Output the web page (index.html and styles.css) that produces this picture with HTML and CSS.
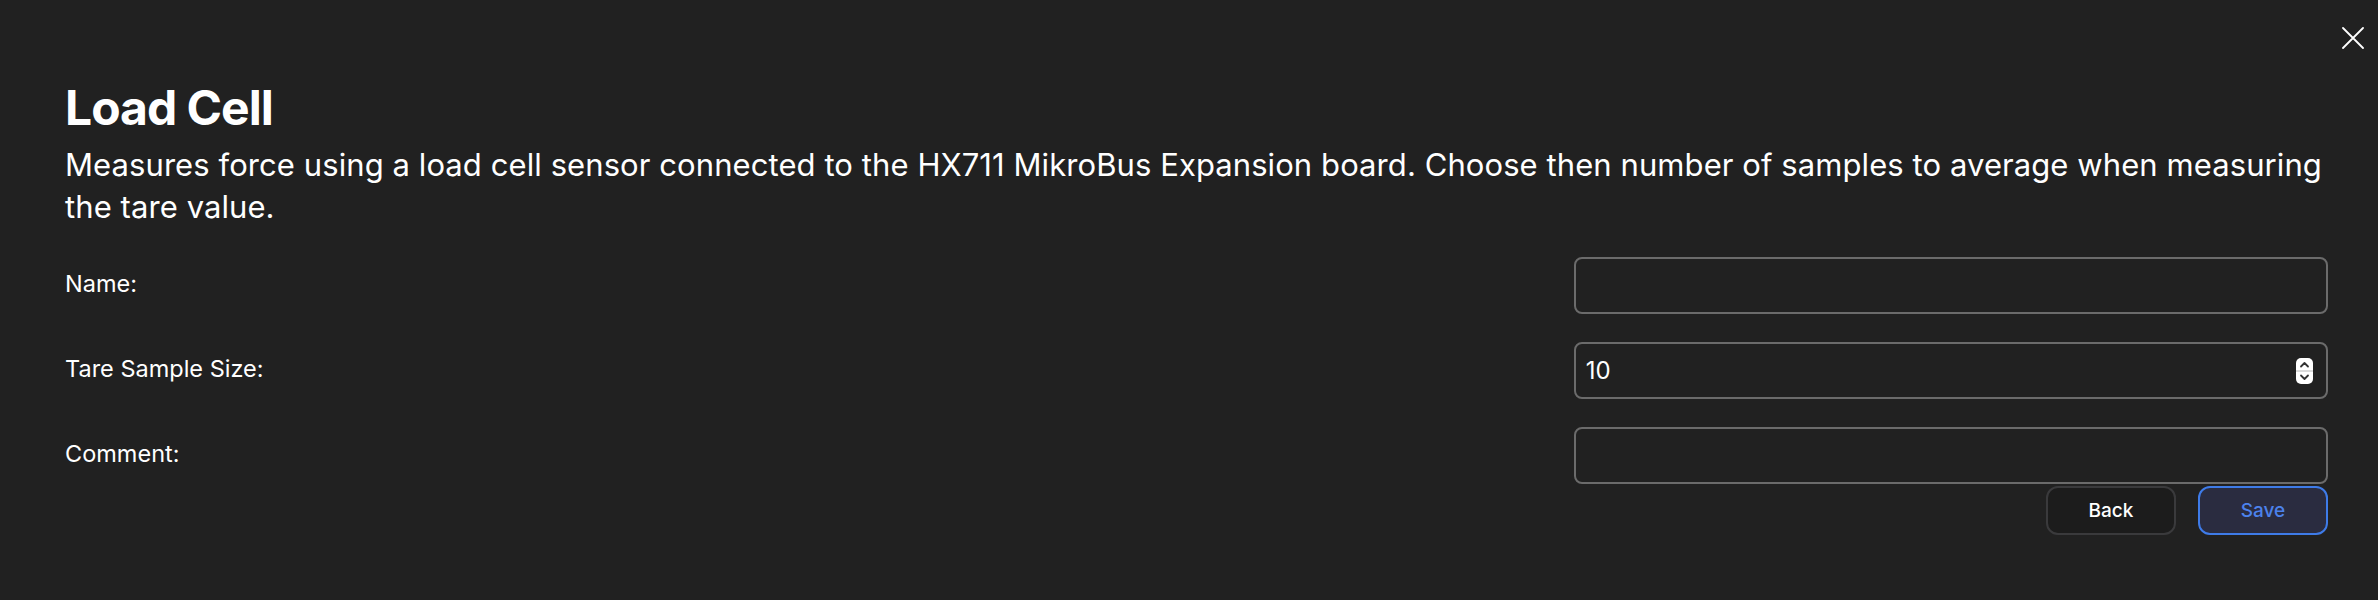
FILE: index.html
```html
<!DOCTYPE html>
<html lang="en">
<head>
  <meta charset="UTF-8">
  <meta name="viewport" content="width=device-width, initial-scale=1.0">
  <title>Load Cell</title>
  <link rel="stylesheet" href="styles.css">
</head>
<body>
  <div class="modal">
    <!-- Close -->
    <button class="close" aria-label="Close">
      <svg width="22" height="22" viewBox="0 0 22 22">
        <path d="M1 1 L21 21 M21 1 L1 21" stroke="#fff" stroke-width="1.8" stroke-linecap="round" fill="none"/>
      </svg>
    </button>

    <h1 class="title">Load Cell</h1>
    <p class="desc">Measures force using a load cell sensor connected to the HX711 MikroBus Expansion board. Choose then number of samples to average when measuring the tare value.</p>

    <!-- Form fields -->
    <form class="fields">
      <label class="field-label" for="name">Name:</label>
      <div class="field-box">
        <input id="name" type="text">
      </div>

      <label class="field-label" for="tare">Tare Sample Size:</label>
      <div class="field-box">
        <input id="tare" type="text" value="10">
        <span class="spinner">
          <svg width="17" height="26" viewBox="0 0 17 26">
            <rect x="0" y="0" width="17" height="26" rx="5" fill="#fff"/>
            <line x1="0" y1="13" x2="17" y2="13" stroke="#cfcfcf" stroke-width="1.5"/>
            <path d="M5 8.5 L8.5 5 L12 8.5" stroke="#333" stroke-width="1.8" fill="none" stroke-linecap="round" stroke-linejoin="round"/>
            <path d="M5 17.5 L8.5 21 L12 17.5" stroke="#333" stroke-width="1.8" fill="none" stroke-linecap="round" stroke-linejoin="round"/>
          </svg>
        </span>
      </div>

      <label class="field-label" for="comment">Comment:</label>
      <div class="field-box">
        <input id="comment" type="text">
      </div>
    </form>

    <!-- Actions -->
    <div class="actions">
      <button class="btn btn-back">Back</button>
      <button class="btn btn-save">Save</button>
    </div>
  </div>
</body>
</html>
```

FILE: styles.css
```css
/* General Styles */
body {
  margin: 0;
  padding: 0;
  background-color: #212121;
  color: #fff;
  font-family: 'Inter', 'Noto Sans', sans-serif;
}

.modal {
  position: relative;
  padding: 79px 50px 40px 65px;
}

.close {
  position: absolute;
  top: 27px;
  right: 14px;
  padding: 0;
  border: none;
  background: none;
  cursor: pointer;
}

.title {
  margin: 0;
  font-size: 48px;
  font-weight: 700;
  line-height: 57px;
  letter-spacing: -1px;
}

.desc {
  margin: 8px 0 0;
  font-size: 31px;
  line-height: 42px;
  letter-spacing: 0.08px;
}

/* Form */
.fields {
  display: grid;
  grid-template-columns: 2fr 1fr;
  row-gap: 28px;
  margin-top: 29px;
}

.field-label {
  padding-top: 12px;
  font-size: 23.5px;
  line-height: 29px;
}

.field-box {
  display: flex;
  align-items: center;
  height: 57px;
  box-sizing: border-box;
  border: 2px solid #6b6b6b;
  border-radius: 8px;
  padding: 0 13px 0 10px;
}

.field-box input {
  flex: 1;
  min-width: 0;
  border: none;
  outline: none;
  background: transparent;
  color: #fff;
  font-family: inherit;
  font-size: 24px;
  padding: 0;
}

.spinner {
  display: flex;
}

/* Buttons */
.actions {
  display: flex;
  justify-content: flex-end;
  gap: 22px;
  margin-top: 2px;
}

.btn {
  width: 130px;
  height: 49px;
  border-radius: 12px;
  font-family: inherit;
  font-size: 19px;
  font-weight: 500;
  cursor: pointer;
}

.btn-back {
  background: #1c1c1c;
  border: 2px solid #3a3a3c;
  color: #fff;
}

.btn-save {
  background: #2a2c40;
  border: 2px solid #3e7be8;
  color: #4c82ec;
}
```
